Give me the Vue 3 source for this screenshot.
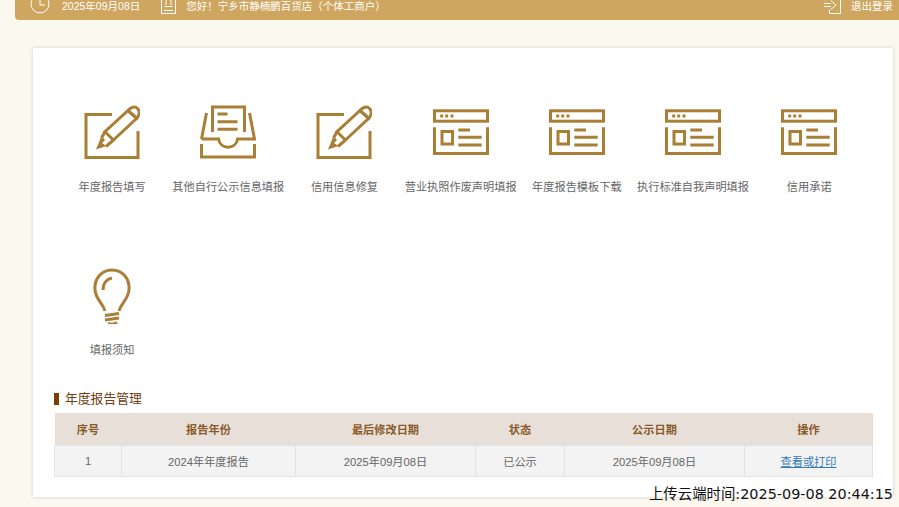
<template>
  <div class="page">
    <header class="topbar">
      <svg class="clock" viewBox="0 0 20 20">
        <circle cx="10" cy="10" r="9" />
        <path d="M10 4v7h5" />
      </svg>
      <span class="date">2025年09月08日</span>
      <svg class="user" viewBox="0 0 15 19">
        <rect x="0.5" y="0.5" width="14" height="18" />
        <path d="M5 10V6.500a2.500 2.500 0 0 1 5 0V10M3.500 11.500h8M3 15.500h9" />
      </svg>
      <span class="hello">您好！宁乡市静楠鹏百货店（个体工商户）</span>
      <svg class="exit" viewBox="0 0 17 16">
        <path d="M4 0.500h12.500v15H5.500V11.500M0 5.500h7M0 8.500h7M7 2.500l5 4.500-5 4.500" />
      </svg>
      <span class="logout">退出登录</span>
    </header>

    <main class="card">
      <ul class="menu">
        <li v-for="item in menus" :key="item.name" class="menu-item">
          <svg v-if="item.icon === 'pencil'" class="icon" viewBox="0 0 56 56">
            <path d="M28 9.500H2V52.500H54V26" />
            <path d="M21 26.700L44 5.500L52.700 13.300L29.500 35L21 26.700Z" />
            <path d="M44 5.500C47 2 51 1 53.500 3.500C56 6 55.500 10 52.700 13.300Z" />
            <path class="solid" d="M12 44.500L17.500 31L21 35L18 38L22.500 41Z" />
            <path d="M17.500 33L21 26.700M22 41.500L29.500 35" />
          </svg>
          <svg v-else-if="item.icon === 'tray'" class="icon" viewBox="0 0 56 56">
            <path d="M1.500 39V52H54.500V39" />
            <path d="M1.500 34H18.600C20 45 36 45 37.600 34H54.500L49.500 8M6.500 8L1.500 34" />
            <path d="M12.500 27V2H44.500V27" />
            <path d="M17.500 9H27.500M17.500 16.700H37.500M17.500 24.300H37.500" />
          </svg>
          <svg v-else-if="item.icon === 'window'" class="icon window" viewBox="0 0 56 56">
            <rect x="1.500" y="5.800" width="53" height="10.400" />
            <path class="solid" d="M7.200 9.500h3v3h-3zM12.200 9.500h3v3h-3zM17.500 9.500h3v3h-3z" />
            <path d="M1.500 22.300V48.500H54.500V22.300" />
            <rect x="9" y="26.500" width="10.500" height="12.500" />
            <path d="M25.300 25H37M25.300 32.300H48.700M25.300 40H48.700" />
          </svg>
          <svg v-else class="icon" viewBox="0 0 56 56">
            <path d="M21 44C19 36 12 33 11 23C10 11 18 3 28 3C38 3 46 11 45 23C44 33 37 36 35 44" transform="translate(0 -1)" />
            <path d="M19 22C19 15 23 11 28 10" />
            <path d="M21 47.500L35 45.500M21 52L35 50M24 55.500C27 56.500 31 56 33 54.500" />
          </svg>
          <span class="menu-name">{{ item.name }}</span>
        </li>
      </ul>

      <h2 class="title">年度报告管理</h2>
      <table class="report">
        <colgroup>
          <col v-for="w in colWidths" :key="w" :style="{ width: w + 'px' }" />
        </colgroup>
        <thead>
          <tr>
            <th>序号</th>
            <th>报告年份</th>
            <th>最后修改日期</th>
            <th>状态</th>
            <th>公示日期</th>
            <th>操作</th>
          </tr>
        </thead>
        <tbody>
          <tr>
            <td>1</td>
            <td>2024年年度报告</td>
            <td>2025年09月08日</td>
            <td>已公示</td>
            <td>2025年09月08日</td>
            <td><a href="#" class="view">查看或打印</a></td>
          </tr>
        </tbody>
      </table>
    </main>

    <div class="stamp">上传云端时间:2025-09-08 20:44:15</div>
  </div>
</template>

<script setup>
const menus = [
  { name: '年度报告填写', icon: 'pencil' },
  { name: '其他自行公示信息填报', icon: 'tray' },
  { name: '信用信息修复', icon: 'pencil' },
  { name: '营业执照作废声明填报', icon: 'window' },
  { name: '年度报告模板下载', icon: 'window' },
  { name: '执行标准自我声明填报', icon: 'window' },
  { name: '信用承诺', icon: 'window' },
  { name: '填报须知', icon: 'bulb' }
]

const colWidths = [67, 174, 180, 89, 180, 128]
</script>

<style scoped>
.page {
  position: relative;
  height: 507px;
  overflow: hidden;
  background-color: #fbf8f0;
  font-family: "Liberation Sans", "Noto Sans CJK SC", sans-serif;
}

.topbar {
  height: 20px;
  box-sizing: border-box;
  margin-left: 15px;
  display: flex;
  align-items: flex-end;
  padding: 0 6px 9px 15px;
  background-color: #cfa660;
  border-bottom-left-radius: 4px;
  color: #fff;
  font-size: 10.5px;
  line-height: 12px;
  overflow: hidden;
}

.topbar svg {
  flex: none;
  fill: none;
  stroke: #fff;
  stroke-width: 1;
}

.clock {
  width: 20px;
  height: 20px;
  margin-bottom: -3px;
}

.date {
  margin-left: 12px;
  margin-bottom: -1px;
}

.user {
  width: 15px;
  height: 19px;
  margin-left: 21px;
  margin-bottom: -3px;
}

.hello {
  margin-left: 10px;
  margin-bottom: -1px;
}

.exit {
  width: 17px;
  height: 16px;
  margin-left: auto;
  margin-bottom: -3px;
}

.logout {
  margin-left: 10px;
  margin-bottom: -1px;
}

.card {
  height: 449px;
  margin: 28px 6px 0 33px;
  padding: 57px 21px 0;
  box-sizing: border-box;
  background-color: #fff;
  box-shadow: 0 0 4px rgba(0, 0, 0, 0.16);
}

.menu {
  display: grid;
  grid-template-columns: repeat(7, 116.2px);
  grid-auto-rows: 125px;
  row-gap: 38px;
  margin: 0;
  padding: 0;
  list-style: none;
}

.menu-item {
  display: flex;
  flex-direction: column;
  align-items: center;
}

.icon {
  width: 56px;
  height: 56px;
  fill: none;
  stroke: #a97f36;
  stroke-width: 3;
}

.icon .solid {
  fill: #a97f36;
  stroke: none;
}

.menu-name {
  margin-top: 19px;
  font-size: 11.2px;
  line-height: 14px;
  color: #666;
  white-space: nowrap;
}

.title {
  display: flex;
  align-items: center;
  gap: 6px;
  margin: -2px 0 6px;
  font-size: 12.8px;
  line-height: 16px;
  font-weight: normal;
  color: #6b3e10;
}

.title::before {
  content: "";
  width: 5px;
  height: 12px;
  background-color: #7a3f00;
}

.report {
  width: 818px;
  border-collapse: collapse;
  table-layout: fixed;
  font-size: 11.2px;
  text-align: center;
}

.report th {
  height: 32px;
  padding: 0;
  background-color: #e8e0d8;
  color: #8b5a2b;
}

.report td {
  height: 30px;
  padding: 0;
  background-color: #f3f3f3;
  border: 1px solid #e3e3e3;
  color: #666;
}

.view {
  color: #337ab7;
}

.stamp {
  position: absolute;
  right: 6px;
  top: 485px;
  font-family: "DejaVu Sans", "Noto Sans CJK SC", sans-serif;
  font-size: 14.4px;
  line-height: 18px;
  color: #111;
  white-space: nowrap;
}
</style>
